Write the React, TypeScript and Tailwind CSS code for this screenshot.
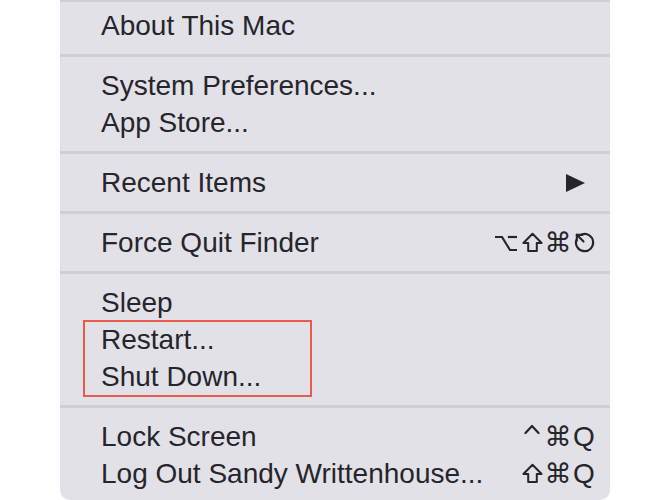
import React from "react";

const INK = "#26252b";

const Sep = () => (
  <div className="h-[23px] flex items-center">
    <div className="h-[3px] w-full bg-[#d0cfd5]" />
  </div>
);

const Slot = ({ children }: { children: React.ReactNode }) => (
  <span className="w-[26px] h-[37px] inline-flex items-center justify-center">{children}</span>
);

const Cmd = () => (
  <Slot>
    <span className="text-[27px] leading-none [font-family:'DejaVu_Sans',sans-serif]">⌘</span>
  </Slot>
);

const Opt = () => (
  <Slot>
    <svg width="22" height="18" viewBox="0 0 22 18" fill="none" stroke={INK} strokeWidth="2.2" strokeLinecap="square">
      <path d="M1 3 H7 L15 16 H21" />
      <path d="M14 3 H21" />
    </svg>
  </Slot>
);

const Shift = () => (
  <Slot>
    <svg width="21" height="21" viewBox="0 0 22 22" fill="none" stroke={INK} strokeWidth="2.1" strokeLinejoin="round">
      <path d="M11 1.8 L20.5 11.5 H15.5 V20 H6.5 V11.5 H1.5 Z" />
    </svg>
  </Slot>
);

const Ctrl = () => (
  <Slot>
    <svg width="16" height="20" viewBox="0 0 16 20" fill="none" stroke={INK} strokeWidth="2.2" strokeLinecap="round" strokeLinejoin="round" className="mb-[8px]">
      <path d="M1.5 10 L8 3 L14.5 10" />
    </svg>
  </Slot>
);

const Q = () => (
  <Slot>
    <span className="text-[28px] leading-none">Q</span>
  </Slot>
);

const Esc = () => (
  <Slot>
    <svg width="23" height="23" viewBox="0 0 24 24" fill="none" stroke={INK} strokeWidth="2.2" strokeLinecap="round" strokeLinejoin="round">
      <path d="M9.5 3.4 A9 9 0 1 1 3.4 9.5" />
      <path d="M4 4 L11 11" />
      <path d="M4 4 L4 10" />
      <path d="M4 4 L10 4" />
    </svg>
  </Slot>
);

const Item = ({ label, right }: { label: string; right?: React.ReactNode }) => (
  <div className="h-[37px] flex items-center justify-between pl-[41px] pr-[13px]">
    <span className="leading-[37px]">{label}</span>
    {right ? <span className="flex items-center">{right}</span> : null}
  </div>
);

export default function App() {
  return (
    <div className="w-[670px] h-[500px] bg-white overflow-hidden">
      <div className="ml-[60px] w-[550px] h-[500px] bg-[#e2e1e7] rounded-b-[10px] text-[28px] text-[#26252b] [font-family:'Liberation_Sans',Arial,sans-serif]">
        <div className="h-[2px] bg-[#d0cfd5]" />
        <div className="h-[5px]" />
        <Item label="About This Mac" />
        <Sep />
        <Item label="System Preferences..." />
        <Item label="App Store..." />
        <Sep />
        <Item
          label="Recent Items"
          right={
            <span className="w-[26px] flex justify-center mr-[9px]">
              <svg width="19" height="18" viewBox="0 0 19 18">
                <polygon points="0,0 19,9 0,18" fill={INK} />
              </svg>
            </span>
          }
        />
        <Sep />
        <Item
          label="Force Quit Finder"
          right={
            <>
              <Opt />
              <Shift />
              <Cmd />
              <Esc />
            </>
          }
        />
        <Sep />
        <Item label="Sleep" />
        <div className="relative">
          <Item label="Restart..." />
          <Item label="Shut Down..." />
          <div className="absolute left-[23px] top-[-1px] w-[229px] h-[77px] border-2 border-[#ea5a50]" />
        </div>
        <Sep />
        <Item
          label="Lock Screen"
          right={
            <>
              <Ctrl />
              <Cmd />
              <Q />
            </>
          }
        />
        <Item
          label="Log Out Sandy Writtenhouse..."
          right={
            <>
              <Shift />
              <Cmd />
              <Q />
            </>
          }
        />
      </div>
    </div>
  );
}
